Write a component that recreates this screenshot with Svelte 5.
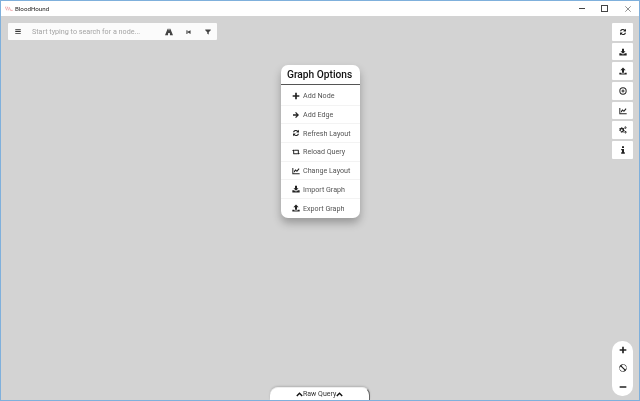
<script>
  const icons = {
    plus: 'M9.500 2h5v7.500H22v5h-7.500V22h-5v-7.500H2v-5h7.500z',
    arrow: 'M12 3l9 9-9 9-2.600-2.600L13.800 14H3v-4h10.800L9.400 5.600z',
    refresh: 'M21 2v8.500h-8.500l3-3A6 6 0 0 0 6.500 10H2.800A9.500 9.500 0 0 1 18 5zM3 22v-8.500h8.500l-3 3A6 6 0 0 0 17.500 14h3.700A9.500 9.500 0 0 1 6 19z',
    retweet: 'M0 9l4.500-4.500L9 9H6.500v6.500H15l2.500 3H4.500a1 1 0 0 1-1-1V9zM24 15l-4.500 4.500L15 15h2.500V8.500H9l-2.500-3h13a1 1 0 0 1 1 1V15z',
    chart: 'M1 3h3v15.500h19V22H1zM6 12l4.500-5 4 3.500L20 4l2.500 2-7.500 9-4-3.500-3 4.500H6z',
    download: 'M9 2h6v8h4.500L12 17.500 4.500 10H9zM1 16h5.500l3 3h5l3-3H23v6.500H1z',
    upload: 'M12 1.500l8 8.500h-5v7H9v-7H4zM1 17h6v2.500h10V17h6v5.500H1z',
    road: 'M8 2h3l-.3 5h2.600L13 2h3l8 20h-9l-.5-7h-5L9 22H0z',
    first: 'M2 3h5v7.500L22 3v18L7 13.500V21H2z',
    filter: 'M1 2h22v3l-8 7.500V22l-6-3.500v-6L1 5z',
    crosshair: 'M12 1a11 11 0 1 0 0 22 11 11 0 0 0 0-22zm0 3a8 8 0 1 1 0 16 8 8 0 0 1 0-16zM10.500 7.500h3v3h3v3h-3v3h-3v-3h-3v-3h3z',
    cogs: 'M8 4l2 .2.700 2 2 .9 2-.8 1.300 1.700-1.200 1.700.3 2 1.900 1-.4 2.200-2.200.3-1 1.800.8 2-1.700 1.200-1.600-1.400-2.200.1-1.400 1.500-1.900-1 .6-2-1.100-1.800-2.200-.5L0 12.100l1.900-1.100.2-2.200-1.300-1.600 1.400-1.500 1.900.8 1.900-.9zM8 10a3 3 0 1 0 0 6 3 3 0 0 0 0-6zM19.500 1l1.500.3.300 1.400 1.400.7-.5 1.400.5 1.400-1.400.7-.3 1.400-1.500.3-1-1.100-1.500-.2-.7-1.400.7-1.300-.7-1.300.9-1.300 1.300.1zm0 3a1 1 0 1 0 0 2 1 1 0 0 0 0-2zM19.500 15l1.500.3.300 1.400 1.400.7-.5 1.400.5 1.400-1.400.7-.3 1.400-1.500.3-1-1.100-1.500-.2-.7-1.400.7-1.300-.7-1.300.9-1.300 1.300.1zm0 3a1 1 0 1 0 0 2 1 1 0 0 0 0-2z',
    info: 'M9 1h6v5H9zM6.500 9H15v10h2.500v4h-11v-4H9v-6H6.500z',
    ban: 'M12 1a11 11 0 1 0 0 22 11 11 0 0 0 0-22zm-7 6.500 11.500 11.500A8 8 0 0 1 5 7.500zm2.500-2.500A8 8 0 0 1 19 16.500z',
    minus: 'M2 9.500h20v5H2z',
    bars: 'M1 3h22v3.500H1zM1 10.250h22v3.500H1zM1 17.500h22V21H1z',
    up: 'M12 4l11 11-3.500 3.500L12 11l-7.500 7.500L1 15z'
  };
  const items = [
    ['plus', 'Add Node'], ['arrow', 'Add Edge'], ['refresh', 'Refresh Layout'],
    ['retweet', 'Reload Query'], ['chart', 'Change Layout'], ['download', 'Import Graph'], ['upload', 'Export Graph']
  ];
  const tools = ['refresh', 'download', 'upload', 'crosshair', 'chart', 'cogs', 'info'];
</script>

{#snippet icon(name, cls)}
  <svg class={cls} viewBox="0 0 24 24" aria-hidden="true"><path d={icons[name]} fill-rule="evenodd" /></svg>
{/snippet}

<div class="window">
  <header class="titlebar">
    <svg class="logo" viewBox="0 0 12 8" aria-hidden="true">
      <path d="M0 1l2.500 6M3 1l2.500 6M6 1.500l2.500 5.500H12" fill="none" stroke="#eb9a9f" stroke-width="1.300" />
    </svg>
    <span class="apptitle txt">BloodHound</span>
    <div class="winctl">
      <span class="ctl"><i class="min"></i></span>
      <span class="ctl"><i class="max"></i></span>
      <span class="ctl">
        <svg viewBox="0 0 10 10" class="close" aria-hidden="true"><path d="M.5.500l9 9M9.500.500l-9 9" stroke="#444" fill="none" /></svg>
      </span>
    </div>
  </header>

  <main class="stage">
    <div class="search">
      {@render icon('bars', 'bars')}
      <span class="placeholder txt">Start typing to search for a node...</span>
      {@render icon('road', 'sicon road')}
      {@render icon('first', 'sicon first')}
      {@render icon('filter', 'sicon filter')}
    </div>

    <div class="centre">
      <section class="menu">
        <h2><span class="txt">Graph Options</span></h2>
        <ul>
          {#each items as [ic, label]}
            <li>{@render icon(ic, 'mi')}<span class="txt">{label}</span></li>
          {/each}
        </ul>
      </section>
      <div class="rawquery">
        {@render icon('up', 'up')}<span class="txt">Raw Query</span>{@render icon('up', 'up')}
      </div>
    </div>

    <div class="side">
      <div class="tools">
        {#each tools as t}
          <button class="tool">{@render icon(t, 'ti')}</button>
        {/each}
      </div>
      <div class="zoom">
        <button>{@render icon('plus', 'ti')}</button>
        <button>{@render icon('ban', 'ti')}</button>
        <button>{@render icon('minus', 'ti')}</button>
      </div>
    </div>
  </main>
</div>

<style>
  :global(body) { margin: 0; }
  .window {
    width: 640px; height: 401px; box-sizing: border-box;
    border: 1px solid #7fb0dc;
    display: flex; flex-direction: column; overflow: hidden;
    font-family: Roboto, "Noto Sans", sans-serif;
    background: #d3d3d3;
  }
  .txt { display: inline-block; will-change: transform; }
  .titlebar {
    height: 15px; flex: none; background: #fff;
    display: flex; align-items: center; padding-left: 4px;
  }
  .logo { width: 8px; height: 5px; margin-right: 2px; }
  .apptitle { font-size: 6.200px; color: #222; white-space: nowrap; }
  .winctl { margin-left: auto; display: flex; }
  .ctl { width: 23px; height: 14px; display: flex; align-items: center; justify-content: center; }
  .min { width: 6px; height: 1px; background: #444; }
  .max { width: 5px; height: 5px; border: 1px solid #444; }
  .close { width: 6px; height: 6px; }

  .stage {
    flex: 1; min-height: 0;
    display: grid; grid-template-columns: 1fr 79px 1fr;
  }
  .search {
    justify-self: start; align-self: start;
    margin: 7px 0 0 7px;
    width: 209px; height: 17px; box-sizing: border-box;
    background: #fbfbfb; border-radius: 1px;
    display: flex; align-items: center; padding-left: 7px;
  }
  .bars { width: 6px; height: 7px; fill: #333; flex: none; }
  .placeholder { font-size: 7.200px; color: #a4a4a4; margin-left: 11px; width: 133px; white-space: nowrap; flex: none; }
  .sicon { height: 8px; fill: #444; flex: none; }
  .road { width: 8px; }
  .first { width: 5px; margin-left: 13px; }
  .filter { width: 6px; margin-left: 14px; }

  .centre {
    grid-column: 2;
    display: flex; flex-direction: column; justify-content: space-between;
    padding-top: 49px;
  }
  .menu {
    background: #fff; border-radius: 7px;
    box-shadow: 0 5px 9px rgba(0,0,0,.28);
  }
  h2 {
    margin: 0; height: 20px; box-sizing: border-box;
    font-size: 10.200px; font-weight: 500; color: #111; text-align: center; line-height: 20px;
    border-bottom: 1px solid #555;
    white-space: nowrap;
  }
  ul { list-style: none; margin: 0; padding: 2px 0 0; }
  li {
    height: 18.700px; box-sizing: border-box;
    display: flex; align-items: center; padding-left: 11px;
    border-bottom: 1px solid #f3f3f3;
    font-size: 7.150px; color: #555;
    white-space: nowrap;
  }
  li:last-child { border-bottom: 0; }
  li span { margin-left: 3px; }
  .mi { width: 8px; height: 8px; fill: #222; flex: none; }

  .rawquery {
    align-self: center;
    width: 100px; height: 13px; box-sizing: border-box;
    background: #fff; border-radius: 8px 8px 0 0;
    display: flex; align-items: center; justify-content: center;
    font-size: 7px; color: #333; white-space: nowrap;
    border-right: 1px solid #666; border-top: 1px solid #eee;
    box-shadow: 0 -1px 2px rgba(0,0,0,.15);
    flex: none;
  }
  .up { width: 7px; height: 7px; fill: #111; }

  .side {
    grid-column: 3;
    display: flex; flex-direction: column; justify-content: space-between; align-items: flex-end;
    padding: 7px 6px 4px 0;
  }
  .tools { display: flex; flex-direction: column; gap: 2px; }
  button {
    display: flex; align-items: center; justify-content: center;
    border: 0; padding: 0; background: #fff; width: 21px; height: 17.700px;
  }
  .tool { border-radius: 1px; }
  .ti { width: 8px; height: 8px; fill: #222; }
  .zoom {
    display: flex; flex-direction: column; width: 21px;
    border-radius: 10px; overflow: hidden;
  }
  .zoom button { height: 18.500px; }
</style>
